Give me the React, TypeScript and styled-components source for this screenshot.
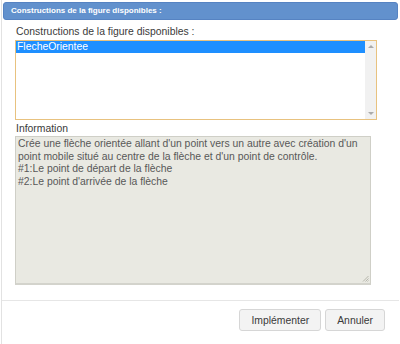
import React from "react";
import styled, { createGlobalStyle } from "styled-components";

const Global = createGlobalStyle`
  html, body { margin: 0; padding: 0; background: #ffffff; }
  body { font-family: "Liberation Sans", Arial, sans-serif; }
  * { box-sizing: border-box; }
`;

const Dialog = styled.div`
  margin-left: 1px;
  width: 399px;
  height: 344px;
  border-left: 1px solid #e2e2e2;
  padding: 2px 2px 0 1px;
  display: flex;
  flex-direction: column;
  background: #fff;
`;

const TitleBar = styled.div`
  height: 18px;
  background: #6291cd;
  border: 1px solid #5683c2;
  border-radius: 3px;
  color: #ffffff;
  font-weight: bold;
  font-size: 8px;
  line-height: 16px;
  padding-left: 7px;
  white-space: nowrap;
`;

const Body = styled.div`
  padding: 6px 0 0 12px;
  display: flex;
  flex-direction: column;
`;

const FieldLabel = styled.div<{ $gap: number }>`
  font-size: 10.4px;
  line-height: 12px;
  color: #3a3a3a;
  padding-left: 1px;
  margin-bottom: ${(p) => p.$gap}px;
`;

const ListBox = styled.div`
  width: 362px;
  height: 80px;
  border: 1px solid #e8c27f;
  display: flex;
  background: #fff;
  margin-bottom: 3px;
`;

const ListItems = styled.div`
  flex: 1;
  display: flex;
  flex-direction: column;
`;

const ListItem = styled.div<{ $selected?: boolean }>`
  height: 12px;
  line-height: 12px;
  font-size: 10.4px;
  padding-left: 1px;
  color: ${(p) => (p.$selected ? "#ffffff" : "#333")};
  background: ${(p) => (p.$selected ? "#1e8fff" : "transparent")};
`;

const ScrollTrack = styled.div`
  width: 11px;
  background: #f1f1f1;
  display: flex;
  flex-direction: column;
  justify-content: space-between;
  align-items: center;
  padding: 4px 0 4px;
`;

const Arrow = styled.div<{ $down?: boolean }>`
  width: 0;
  height: 0;
  border-left: 3px solid transparent;
  border-right: 3px solid transparent;
  ${(p) =>
    p.$down
      ? "border-top: 3px solid #ababab;"
      : "border-bottom: 3px solid #ababab;"}
`;

const InfoBox = styled.div`
  position: relative;
  width: 356px;
  height: 149px;
  background: #e9e9e2;
  border: 1px solid #cfcfc7;
  border-bottom: 2px solid #d3d3cc;
  padding: 1px 2px;
  font-size: 10.4px;
  line-height: 12.5px;
  color: #585858;
  white-space: pre-line;
`;

const Grip = styled.svg`
  position: absolute;
  right: 1px;
  bottom: 1px;
`;

const Footer = styled.div`
  margin: 15px -1px 0;
  border-top: 1px solid #e6e6e6;
  padding: 8px 14px 0 0;
  display: flex;
  justify-content: flex-end;
  gap: 4px;
`;

const Button = styled.button`
  height: 22px;
  padding: 0 11px;
  background: #f3f3f3;
  border: 1px solid #d6d6d6;
  border-radius: 3px;
  font-family: "Liberation Sans", Arial, sans-serif;
  font-size: 10.4px;
  color: #3a3a3a;
  cursor: pointer;
`;

export default function App() {
  return (
    <>
      <Global />
      <Dialog>
        <TitleBar>Constructions de la figure disponibles :</TitleBar>
        <Body>
          <FieldLabel $gap={2}>Constructions de la figure disponibles :</FieldLabel>
          <ListBox>
            <ListItems>
              <ListItem $selected>FlecheOrientee</ListItem>
            </ListItems>
            <ScrollTrack>
              <Arrow />
              <Arrow $down />
            </ScrollTrack>
          </ListBox>
          <FieldLabel $gap={1}>Information</FieldLabel>
          <InfoBox>
            {"Crée une flèche orientée allant d'un point vers un autre avec création d'un\npoint mobile situé au centre de la flèche et d'un point de contrôle.\n#1:Le point de départ de la flèche\n#2:Le point d'arrivée de la flèche"}
            <Grip width="7" height="7" viewBox="0 0 7 7">
              <path d="M1 6.5 L6.5 1 M3.5 6.5 L6.5 3.5 M5.5 6.5 L6.5 5.5" stroke="#a8a8a0" strokeWidth="0.8" />
            </Grip>
          </InfoBox>
        </Body>
        <Footer>
          <Button>Implémenter</Button>
          <Button>Annuler</Button>
        </Footer>
      </Dialog>
    </>
  );
}
